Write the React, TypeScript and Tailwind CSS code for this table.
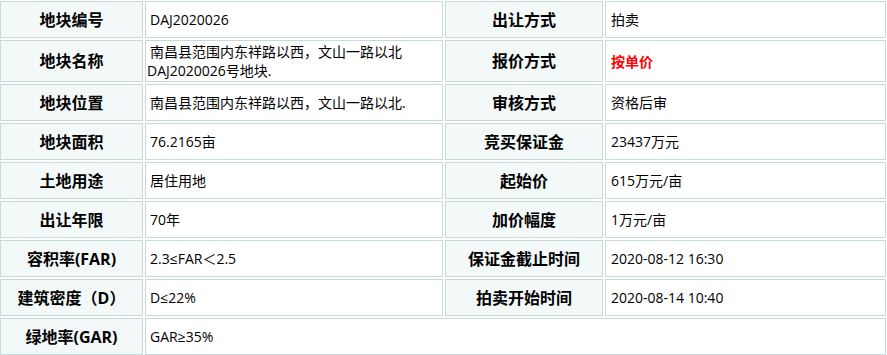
const rows: [string, React.ReactNode, string, React.ReactNode][] = [
  ['地块编号', 'DAJ2020026', '出让方式', '拍卖'],
  [
    '地块名称',
    <>
      南昌县范围内东祥路以西，文山一路以北
      <br />
      DAJ2020026号地块.
    </>,
    '报价方式',
    <span className="font-bold text-[#ff0000]">按单价</span>,
  ],
  ['地块位置', '南昌县范围内东祥路以西，文山一路以北.', '审核方式', '资格后审'],
  ['地块面积', '76.2165亩', '竞买保证金', '23437万元'],
  ['土地用途', '居住用地', '起始价', '615万元/亩'],
  ['出让年限', '70年', '加价幅度', '1万元/亩'],
  ['容积率(FAR)', '2.3≤FAR＜2.5', '保证金截止时间', '2020-08-12 16:30'],
  ['建筑密度（D）', 'D≤22%', '拍卖开始时间', '2020-08-14 10:40'],
]

const label =
  'flex items-center justify-center border border-[#c5dbd8] bg-[#f3f9f9] text-[16px] font-bold text-black'
const value =
  'flex items-center border border-[#c5dbd8] bg-white text-[14px] leading-[19px] text-black'

export default function App() {
  return (
    <div
      className="min-h-[355px] w-[887px] bg-white pt-px"
      style={{ fontFamily: '"Open Sans", "Noto Sans CJK SC", sans-serif' }}
    >
      <div className="grid grid-cols-[143px_298px_158px_281px] grid-rows-[37px_42px_repeat(7,37px)] gap-[2px]">
        {rows.map(([l1, v1, l2, v2], i) => (
          <div key={i} className="contents">
            <div className={label}>{l1}</div>
            <div className={`${value} pl-px`}>
              <div className="indent-[3px]">{v1}</div>
            </div>
            <div className={label}>{l2}</div>
            <div className={`${value} pl-[5px]`}>{v2}</div>
          </div>
        ))}
        <div className={label}>绿地率(GAR)</div>
        <div className={`${value} col-span-3 pl-[4px]`}>GAR≥35%</div>
      </div>
    </div>
  )
}
